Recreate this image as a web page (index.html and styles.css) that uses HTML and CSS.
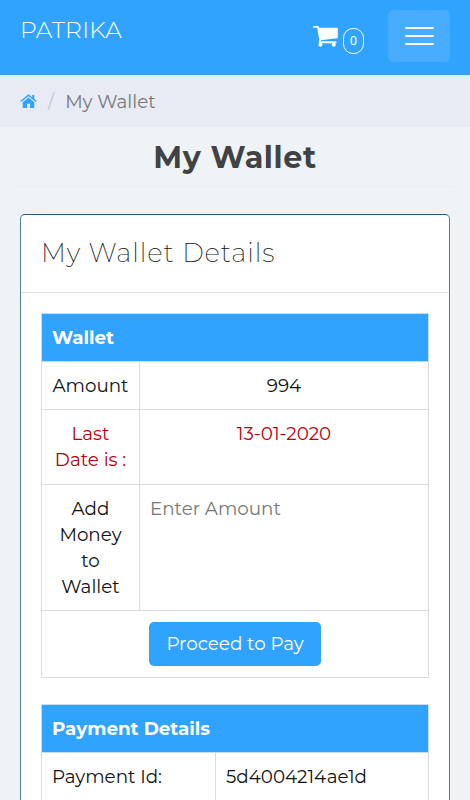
FILE: index.html
```html
<!DOCTYPE html>
<html lang="en">

<head>
	<meta charset="UTF-8">
	<title>My Wallet</title>
	<meta name="viewport" content="width=device-width, initial-scale=1.0">
	<link rel="stylesheet" href="styles.css">
</head>

<body>
	<header class="navbar">
		<a class="brand">PATRIKA</a>
		<a class="cart">
			<svg width="26" height="23" viewBox="0 0 26 23" fill="#fff">
				<path d="M5.4 2.8H24.2Q24.8 2.8 24.8 3.4V12.6Q24.8 13.2 24.2 13.3L7.6 15.2Z" />
				<path d="M1 1.9H4.9L7.3 14.8L6.6 17.2H22.6" fill="none" stroke="#fff" stroke-width="1.9" stroke-linecap="round" stroke-linejoin="round" />
				<circle cx="7.4" cy="19.8" r="2" />
				<circle cx="20.8" cy="19.8" r="2" />
			</svg>
			<span class="cart-count">0</span>
		</a>
		<button class="menu-toggle" aria-label="Menu">
			<span></span>
			<span></span>
			<span></span>
		</button>
	</header>

	<nav class="breadcrumb">
		<svg width="17" height="15" viewBox="0 0 17 15" fill="#30a3ff">
			<path d="M8.5 3.6L14.3 8.3V13.3Q14.3 14 13.6 14H10V9.8H7V14H3.4Q2.7 14 2.7 13.3V8.3Z" />
			<path d="M.7 7.5L8.5 1.1L16.3 7.5" fill="none" stroke="#30a3ff" stroke-width="1.4" />
			<path d="M12.2 1H14.3V6L12.2 4.3Z" />
		</svg>
		<span class="slash">/</span>
		<span>My Wallet</span>
	</nav>

	<main>
		<h1>My Wallet</h1>

		<section class="card">
			<h2>My Wallet Details</h2>
			<div class="card-body">
				<table class="wallet">
					<colgroup>
						<col class="name">
						<col>
					</colgroup>
					<tr>
						<th colspan="2">Wallet</th>
					</tr>
					<tr>
						<td>Amount</td>
						<td>994</td>
					</tr>
					<tr class="last-date">
						<td>Last<br>Date is :</td>
						<td>13-01-2020</td>
					</tr>
					<tr class="add-money">
						<td>Add<br>Money<br>to<br>Wallet</td>
						<td><input type="text" placeholder="Enter Amount"></td>
					</tr>
					<tr class="pay">
						<td colspan="2"><button class="btn">Proceed to Pay</button></td>
					</tr>
				</table>

				<table class="payment">
					<colgroup>
						<col class="name">
						<col>
					</colgroup>
					<tr>
						<th colspan="2">Payment Details</th>
					</tr>
					<tr>
						<td>Payment Id:</td>
						<td>5d4004214ae1d</td>
					</tr>
				</table>
			</div>
		</section>
	</main>
</body>

</html>
```

FILE: styles.css
```css
* {
	box-sizing: border-box;
}

body {
	display: flex;
	flex-direction: column;
	margin: 0;
	height: 100vh;
	overflow: hidden;
	font-family: Montserrat, Inter, sans-serif;
	font-size: 18.3px;
	line-height: 26px;
	color: #111;
	background: #eff3f6;
}

.navbar {
	display: flex;
	flex: none;
	align-items: flex-start;
	height: 75px;
	padding: 10px 20px 0;
	background: #30a3ff;
	border-bottom: 1px solid #3b9de9;
	color: #fff;
}

.brand {
	margin-top: 7px;
	font-size: 23.4px;
	font-weight: 300;
	letter-spacing: 0.2px;
}

.cart {
	display: flex;
	margin: 15px 24px 0 auto;
	gap: 4px;
}

.cart-count {
	width: 21px;
	height: 26px;
	margin-top: 3px;
	border: 1px solid #fff;
	border-radius: 10px;
	font-family: Roboto, sans-serif;
	font-size: 13px;
	line-height: 24px;
	text-align: center;
}

.menu-toggle {
	display: flex;
	flex-direction: column;
	align-items: center;
	justify-content: center;
	gap: 6px;
	width: 62px;
	height: 52px;
	padding: 0;
	border: 1px solid #42abff;
	border-radius: 5px;
	background: #48adff;
}

.menu-toggle span {
	width: 29px;
	height: 2px;
	border-radius: 1px;
	background: #fff;
}

.breadcrumb {
	display: flex;
	flex: none;
	align-items: center;
	height: 52px;
	padding: 1px 20px 0;
	background: #e8ebf4;
	color: #77777b;
}

.slash {
	margin: 0 11px;
	color: #c4c5ca;
}

main {
	display: flex;
	flex: 1;
	flex-direction: column;
	min-height: 0;
}

h1 {
	flex: none;
	height: 60px;
	margin: 0 16px;
	padding-top: 14px;
	border-bottom: 1px solid #ebeef0;
	color: #414244;
	font-size: 30.2px;
	font-weight: 700;
	line-height: 34px;
	text-align: center;
	letter-spacing: 0.6px;
}

.card {
	flex: 1;
	min-height: 0;
	margin: 27px 20px 0;
	border: 1px solid #4a7f9f;
	border-top-color: #285a82;
	border-bottom: 0;
	border-radius: 5px 5px 0 0;
	background: #fff;
	overflow: hidden;
}

h2 {
	height: 78px;
	margin: 0;
	padding: 21px 20px 0;
	border-bottom: 1px solid #e1e4e6;
	font-size: 26px;
	font-weight: 200;
	line-height: 34px;
	letter-spacing: 0.9px;
}

.card-body {
	padding: 20px 20px 0;
}

table {
	width: 388px;
	border-collapse: collapse;
	table-layout: fixed;
	text-align: center;
}

tr {
	height: 48px;
}

th,
td {
	padding: 11px 10px 10px;
	border: 1px solid #dcdcdc;
	line-height: 26px;
	vertical-align: top;
	white-space: nowrap;
}

th {
	border-color: #c6def1;
	background: #30a3ff;
	background-clip: padding-box;
	color: #fff;
	font-weight: 700;
	text-align: left;
}

.wallet .name {
	width: 98px;
}

.last-date {
	height: 75px;
	color: #b8000b;
}

.add-money {
	height: 126px;
}

.add-money input {
	display: block;
	width: 100%;
	height: 26px;
	padding: 0;
	border: 0;
	font: inherit;
	outline: 0;
}

.add-money input::placeholder {
	color: #777;
}

.pay {
	height: 67px;
}

.btn {
	display: block;
	width: 172px;
	height: 44px;
	margin: 0 auto;
	padding: 0;
	border: 0;
	border-radius: 5px;
	background: #30a3ff;
	color: #fff;
	font: inherit;
}

.payment {
	margin-top: 26px;
	text-align: left;
}

.payment .name {
	width: 174px;
}
```
